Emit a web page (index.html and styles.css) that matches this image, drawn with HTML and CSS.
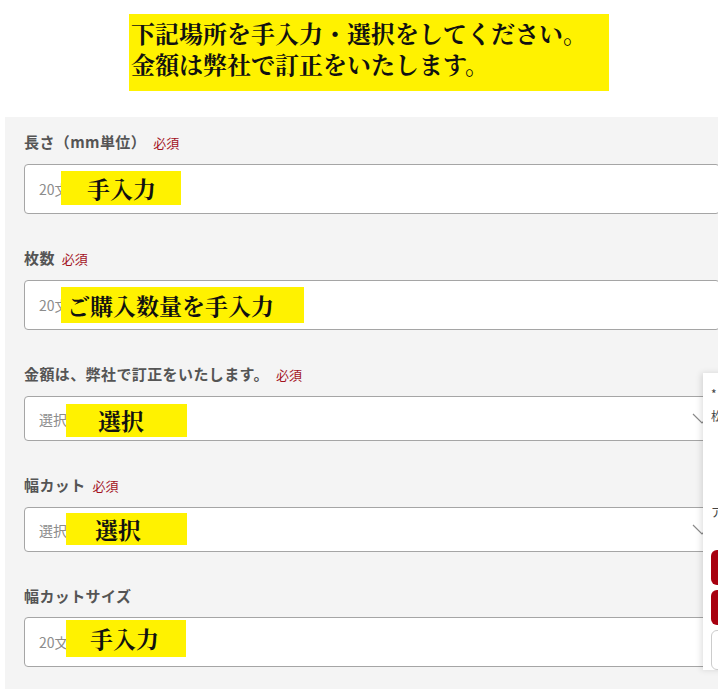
FILE: index.html
```html
<!DOCTYPE html>
<html lang="ja">
<head>
    <meta charset="UTF-8">
    <meta name="viewport" content="width=device-width, initial-scale=1.0">
    <title>ご注文内容の入力</title>
    <link rel="stylesheet" href="styles.css">
</head>
<body>
    <!-- Yellow notice on top -->
    <div class="notice">
        <p>下記場所を手入力・選択をしてください。</p>
        <p>金額は弊社で訂正をいたします。</p>
    </div>

    <div class="panel">
        <div class="field">
            <label class="field-label">長さ（mm単位）<span class="required">必須</span></label>
            <div class="control">
                <input type="text" class="field-input" placeholder="20文字">
                <span class="sticker sticker-len">手入力</span>
            </div>
        </div>

        <div class="field">
            <label class="field-label">枚数<span class="required">必須</span></label>
            <div class="control">
                <input type="text" class="field-input" placeholder="20文字">
                <span class="sticker sticker-qty">ご購入数量を手入力</span>
            </div>
        </div>

        <div class="field">
            <label class="field-label">金額は、弊社で訂正をいたします。<span class="required">必須</span></label>
            <div class="control">
                <select class="field-input field-select">
                    <option>選択</option>
                </select>
                <svg class="chevron" width="20" height="12" viewBox="0 0 20 12"><path d="M1 1 L10 10 L19 1" fill="none" stroke="#8a8a8a" stroke-width="1.2"/></svg>
                <span class="sticker sticker-sel">選択</span>
            </div>
        </div>

        <div class="field">
            <label class="field-label">幅カット<span class="required">必須</span></label>
            <div class="control">
                <select class="field-input field-select">
                    <option>選択</option>
                </select>
                <svg class="chevron" width="20" height="12" viewBox="0 0 20 12"><path d="M1 1 L10 10 L19 1" fill="none" stroke="#8a8a8a" stroke-width="1.2"/></svg>
                <span class="sticker sticker-cut">選択</span>
            </div>
        </div>

        <div class="field">
            <label class="field-label">幅カットサイズ</label>
            <div class="control">
                <input type="text" class="field-input" placeholder="20文字">
                <span class="sticker sticker-size">手入力</span>
            </div>
        </div>

        <!-- Cart box sliding in from the right -->
        <div class="side-card">
            <p class="side-note">*</p>
            <p class="side-note">松</p>
            <p class="side-note side-gap">ア</p>
            <div class="side-btn side-btn-red side-btn-first"></div>
            <div class="side-btn side-btn-red"></div>
            <div class="side-btn side-btn-white"></div>
        </div>
    </div>
</body>
</html>
```

FILE: styles.css
```css
/* Global Styles */
body {
    margin: 0;
    padding: 0;
    background: #fff;
    font-family: "Noto Sans CJK JP", "Noto Sans", sans-serif;
    color: #333;
}

p {
    margin: 0;
}

.notice {
    width: 478px;
    height: 74px;
    margin: 14px 0 0 129px;
    padding: 3px 0 0 2px;
    background-color: #fff200;
    font-family: "Noto Serif CJK JP", "Noto Sans CJK JP", serif;
    font-weight: 700;
    font-size: 24px;
    line-height: 31px;
    color: #111;
}

.panel {
    position: relative;
    width: 694px;
    margin: 26px 0 0 5px;
    padding: 15px 0 19px 19px;
    background-color: #f4f4f4;
    overflow: hidden;
}

.field {
    margin-bottom: 34px;
}

.field:last-of-type {
    margin-bottom: 0;
}

.field-label {
    display: block;
    font-size: 15px;
    letter-spacing: 0.4px;
    font-weight: 700;
    line-height: 20px;
    color: #555;
    margin-bottom: 11px;
}

.required {
    margin-left: 7px;
    font-size: 13px;
    letter-spacing: 0;
    font-weight: 400;
    color: #a3121e;
}

.control {
    position: relative;
}

.field-input {
    display: block;
    box-sizing: border-box;
    width: calc(100% + 2px);
    height: 50px;
    padding: 0 14px;
    border: 1px solid #a5a5a5;
    border-radius: 4px;
    background-color: #fff;
    font-family: "Noto Sans CJK JP", sans-serif;
    font-size: 14px;
    color: #333;
    outline: none;
}

.field-input::placeholder {
    color: #8c8c8c;
}

.field-select {
    height: 45px;
    -webkit-appearance: none;
    appearance: none;
    color: #8c8c8c;
}

.chevron {
    position: absolute;
    right: 6px;
    top: 17px;
}

/* Yellow hand-made labels pasted over the fields */
.sticker {
    position: absolute;
    display: flex;
    align-items: center;
    box-sizing: border-box;
    background-color: #fff200;
    font-family: "Noto Serif CJK JP", "Noto Sans CJK JP", serif;
    font-weight: 700;
    font-size: 23px;
    color: #111;
}

.sticker-len {
    left: 37px;
    top: 7px;
    width: 120px;
    height: 34px;
    padding-left: 26px;
}

.sticker-qty {
    left: 37px;
    top: 7px;
    width: 243px;
    height: 36px;
    padding-left: 6px;
}

.sticker-sel {
    left: 42px;
    top: 8px;
    width: 121px;
    height: 33px;
    padding-left: 32px;
}

.sticker-cut {
    left: 42px;
    top: 6px;
    width: 121px;
    height: 32px;
    padding-left: 29px;
}

.sticker-size {
    left: 42px;
    top: 3px;
    width: 120px;
    height: 37px;
    padding-left: 24px;
}

.side-card {
    position: absolute;
    left: 698px;
    top: 256px;
    width: 40px;
    height: 297px;
    padding: 10px 0 0 8px;
    box-sizing: border-box;
    background-color: #fff;
    box-shadow: -2px 0 6px rgba(0, 0, 0, 0.12);
}

.side-note {
    font-size: 12px;
    line-height: 22px;
    color: #444;
}

.side-gap {
    margin-top: 74px;
}

.side-btn {
    height: 35px;
    margin-bottom: 5px;
    border-radius: 6px;
}

.side-btn-first {
    margin-top: 27px;
}

.side-btn-red {
    background-color: #a8000f;
}

.side-btn-white {
    height: 38px;
    background-color: #fff;
    border: 1px solid #ccc;
}
```
